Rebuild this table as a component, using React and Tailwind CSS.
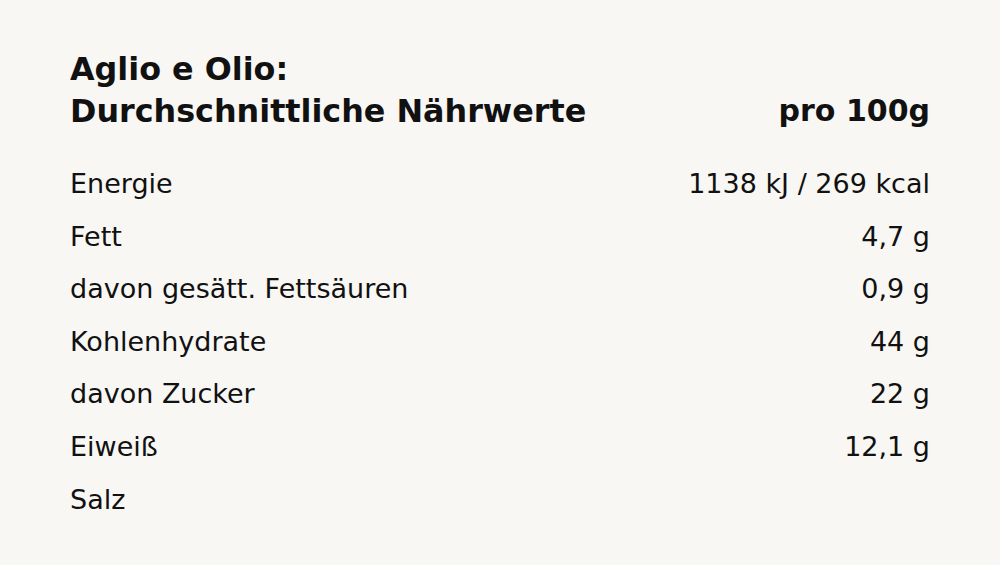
const rows = [
  ['Energie', '1138 kJ / 269 kcal'],
  ['Fett', '4,7 g'],
  ['davon gesätt. Fettsäuren', '0,9 g'],
  ['Kohlenhydrate', '44 g'],
  ['davon Zucker', '22 g'],
  ['Eiweiß', '12,1 g'],
  ['Salz', ''],
];

export default function App() {
  return (
    <div className="w-[1000px] h-[565px] bg-[#f8f7f4] text-[#111111] font-['DejaVu_Sans',sans-serif] px-[70px] pt-[48px]">
      <div className="flex justify-between items-end font-bold leading-[42px]">
        <div className="text-[31.8px]">
          <div>Aglio e Olio:</div>
          <div>Durchschnittliche Nährwerte</div>
        </div>
        <div className="text-[30px]">pro 100g</div>
      </div>
      <div className="mt-[26px] text-[27px]">
        {rows.map(([label, value]) => (
          <div key={label} className="flex justify-between items-center h-[52.6px]">
            <span>{label}</span>
            <span>{value}</span>
          </div>
        ))}
      </div>
    </div>
  );
}
